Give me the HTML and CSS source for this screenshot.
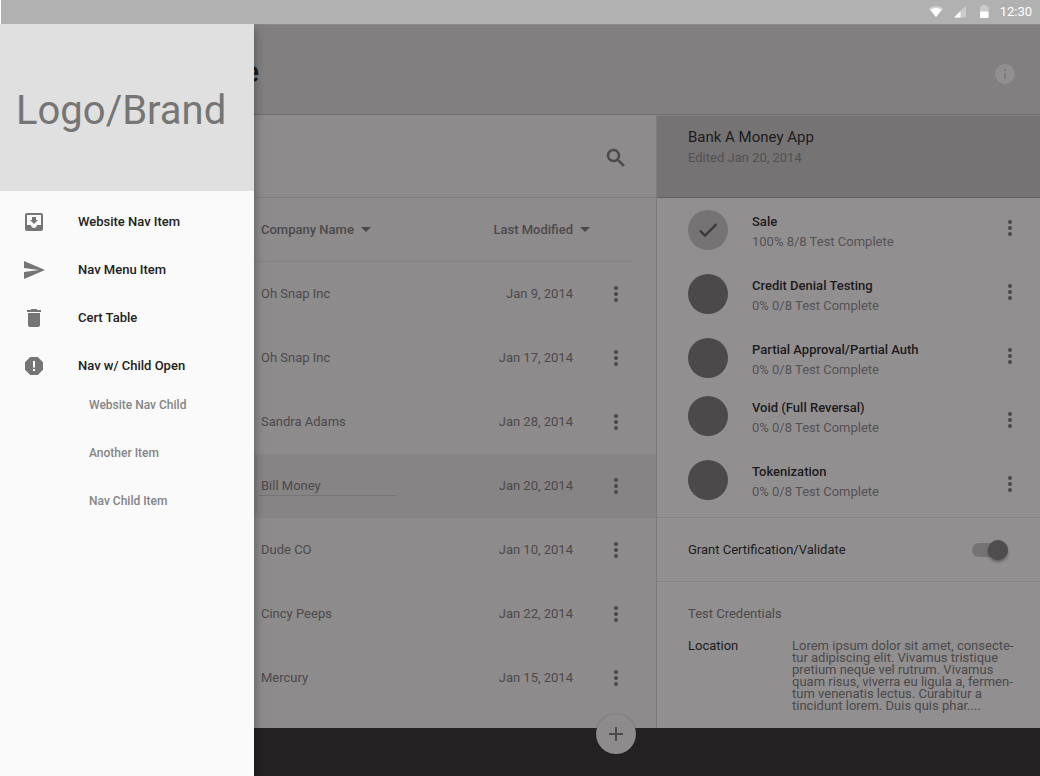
FILE: index.html
```html
<!DOCTYPE html>
<html lang="en">
<head>
<meta charset="utf-8">
<title>Certification Console</title>
<link rel="stylesheet" href="styles.css">
</head>
<body>
<svg width="0" height="0" class="sprite" aria-hidden="true">
  <symbol id="more" viewBox="0 0 24 24"><circle cx="12" cy="6" r="2"/><circle cx="12" cy="12" r="2"/><circle cx="12" cy="18" r="2"/></symbol>
</svg>
<div class="app">
  <div class="statusbar">
    <svg class="status-icon" viewBox="0 0 16 16"><path d="M1 4.400Q8 -.5 15 4.400L8 13z" fill="#cfcfcf"/><path d="M2 5.500Q8 2.500 14 5.500L8 13z" fill="#fff"/></svg>
    <svg class="status-icon" viewBox="0 0 16 16"><path d="M2 13.500L14 1.500V13.500z" fill="#cbcbcb"/><path d="M2 13.500L8.500 7V13.500z" fill="#fff"/></svg>
    <svg class="status-icon" viewBox="0 0 16 16"><path d="M4 13V3.500Q4 2.500 5 2.500H6V1H10.500V2.500H11.500Q12.500 2.500 12.500 3.500V13Q12.500 14 11.500 14H5Q4 14 4 13z" fill="#cbcbcb"/><path d="M4 7.500H12.500V13Q12.500 14 11.500 14H5Q4 14 4 13z" fill="#fff"/></svg>
    <time class="clock">12:30</time>
  </div>

  <aside class="drawer">
    <div class="brand">Logo/Brand</div>
    <nav class="nav">
      <a class="nav-item" href="#"><svg class="icon" viewBox="0 0 24 24"><path d="M19 3H4.990C3.880 3 3.010 3.900 3.010 5L3 19c0 1.100.880 2 1.990 2H19c1.100 0 2-.9 2-2V5c0-1.100-.9-2-2-2zm0 12h-4c0 1.660-1.350 3-3 3s-3-1.340-3-3H4.990V5H19v10zm-3-5h-2V7h-4v3H8l4 4 4-4z"/></svg>Website Nav Item</a>
      <a class="nav-item" href="#"><svg class="icon" viewBox="0 0 24 24"><path d="M2.010 21L23 12 2.010 3 2 10l15 2-15 2z"/></svg>Nav Menu Item</a>
      <a class="nav-item" href="#"><svg class="icon" viewBox="0 0 24 24"><path d="M6 19c0 1.100.9 2 2 2h8c1.100 0 2-.9 2-2V7H6v12zM19 4h-3.500l-1-1h-5l-1 1H5v2h14V4z"/></svg>Cert Table</a>
      <a class="nav-item" href="#"><svg class="icon" viewBox="0 0 24 24"><path d="M15.730 3H8.270L3 8.270v7.460L8.270 21h7.460L21 15.730V8.270z"/><path d="M11 7h2v6.500h-2zM11 15h2v2h-2z" fill="#fff"/></svg>Nav w/ Child Open</a>
      <div class="nav-children">
        <a class="nav-child" href="#">Website Nav Child</a>
        <a class="nav-child" href="#">Another Item</a>
        <a class="nav-child" href="#">Nav Child Item</a>
      </div>
    </nav>
  </aside>

  <header class="topbar">
    <h1 class="page-title">e</h1>
    <button class="icon-button" aria-label="Information"><svg class="icon info" viewBox="0 0 24 24"><circle cx="12" cy="12" r="10" fill="#918f90"/><path d="M11 7h2v2h-2zM11 11h2v6h-2z" fill="#7d7a7b"/></svg></button>
  </header>

  <main class="list-panel">
    <div class="toolbar">
      <button class="icon-button" aria-label="Search"><svg class="icon" viewBox="0 0 24 24"><path stroke="currentColor" stroke-width=".5" d="M15.500 14h-.79l-.28-.27C15.410 12.590 16 11.110 16 9.500 16 5.910 13.090 3 9.500 3S3 5.910 3 9.500 5.910 16 9.500 16c1.610 0 3.090-.59 4.230-1.570l.27.28v.79l5 4.990L20.490 19l-4.990-5zm-6 0C7.010 14 5 11.990 5 9.500S7.010 5 9.500 5 14 7.010 14 9.500 11.990 14 9.500 14z"/></svg></button>
    </div>
    <table class="companies">
      <colgroup><col><col class="col-date"><col class="col-menu"><col class="col-edge"></colgroup>
      <thead>
        <tr><th scope="col"><button class="sort">Company Name<span class="arrow"></span></button></th><th scope="col" colspan="2" class="th-date"><button class="sort">Last Modified<span class="arrow"></span></button></th><td></td></tr>
      </thead>
      <tbody>
        <tr><td>Oh Snap Inc</td><td class="date">Jan 9, 2014</td><td class="menu"><button class="icon-button" aria-label="More"><svg class="icon"><use href="#more"/></svg></button></td><td></td></tr>
        <tr><td>Oh Snap Inc</td><td class="date">Jan 17, 2014</td><td class="menu"><button class="icon-button" aria-label="More"><svg class="icon"><use href="#more"/></svg></button></td><td></td></tr>
        <tr><td>Sandra Adams</td><td class="date">Jan 28, 2014</td><td class="menu"><button class="icon-button" aria-label="More"><svg class="icon"><use href="#more"/></svg></button></td><td></td></tr>
        <tr class="selected"><td class="editing"><input class="name-input" aria-label="Company name" value="Bill Money"></td><td class="date">Jan 20, 2014</td><td class="menu"><button class="icon-button" aria-label="More"><svg class="icon"><use href="#more"/></svg></button></td><td></td></tr>
        <tr><td>Dude CO</td><td class="date">Jan 10, 2014</td><td class="menu"><button class="icon-button" aria-label="More"><svg class="icon"><use href="#more"/></svg></button></td><td></td></tr>
        <tr><td>Cincy Peeps</td><td class="date">Jan 22, 2014</td><td class="menu"><button class="icon-button" aria-label="More"><svg class="icon"><use href="#more"/></svg></button></td><td></td></tr>
        <tr><td>Mercury</td><td class="date">Jan 15, 2014</td><td class="menu"><button class="icon-button" aria-label="More"><svg class="icon"><use href="#more"/></svg></button></td><td></td></tr>
      </tbody>
    </table>
    <button class="fab" aria-label="Add"><svg class="icon" viewBox="0 0 24 24"><path d="M19 13h-6v6h-2v-6H5v-2h6V5h2v6h6v2z"/></svg></button>
  </main>

  <section class="detail">
    <header class="detail-head">
      <h2 class="detail-title">Bank A Money App</h2>
      <p class="detail-sub">Edited Jan 20, 2014</p>
    </header>
    <div class="tests">
      <ul class="test-list">
        <li class="test"><span class="dot done"><svg class="icon" viewBox="0 0 24 24"><path stroke="currentColor" stroke-width=".5" d="M9 16.170L4.830 12l-1.420 1.410L9 19 21 7l-1.410-1.410z"/></svg></span><div class="test-text"><h3>Sale</h3><p>100% 8/8 Test Complete</p></div></li>
        <li class="test"><span class="dot"></span><div class="test-text"><h3>Credit Denial Testing</h3><p>0% 0/8 Test Complete</p></div></li>
        <li class="test tight"><span class="dot"></span><div class="test-text"><h3>Partial Approval/Partial Auth</h3><p>0% 0/8 Test Complete</p></div></li>
        <li class="test"><span class="dot"></span><div class="test-text"><h3>Void (Full Reversal)</h3><p>0% 0/8 Test Complete</p></div></li>
        <li class="test"><span class="dot"></span><div class="test-text"><h3>Tokenization</h3><p>0% 0/8 Test Complete</p></div></li>
      </ul>
      <div class="test-menus">
        <button class="icon-button" aria-label="Sale options"><svg class="icon"><use href="#more"/></svg></button>
        <button class="icon-button" aria-label="Credit Denial Testing options"><svg class="icon"><use href="#more"/></svg></button>
        <button class="icon-button" aria-label="Partial Approval options"><svg class="icon"><use href="#more"/></svg></button>
        <button class="icon-button" aria-label="Void options"><svg class="icon"><use href="#more"/></svg></button>
        <button class="icon-button" aria-label="Tokenization options"><svg class="icon"><use href="#more"/></svg></button>
      </div>
    </div>
    <div class="grant">
      <label for="grant">Grant Certification/Validate</label>
      <input class="switch" type="checkbox" role="switch" id="grant" checked>
    </div>
    <div class="credentials">
      <h3 class="cred-title">Test Credentials</h3>
      <dl class="cred">
        <dt>Location</dt>
        <dd>Lorem ipsum dolor sit amet, consecte-<br>tur adipiscing elit. Vivamus tristique<br>pretium neque vel rutrum. Vivamus<br>quam risus, viverra eu ligula a, fermen-<br>tum venenatis lectus. Curabitur a<br>tincidunt lorem. Duis quis phar....</dd>
      </dl>
    </div>
  </section>

  <footer class="bottombar"></footer>
</div>
</body>
</html>
```
FILE: styles.css
```css
* { box-sizing: border-box; }
body { margin: 0; font: 13px/20px Roboto, sans-serif; color: #4c494a; }
h1, h2, h3, p, ul, dl, dd { margin: 0; padding: 0; font: inherit; }
ul { list-style: none; }
a { color: inherit; text-decoration: none; }
button { border: 0; padding: 0; background: none; font: inherit; color: inherit; cursor: pointer; }
.sprite { position: absolute; }
.icon { display: block; width: 24px; height: 24px; fill: currentColor; }
.icon-button { display: block; width: 24px; height: 24px; }

.app {
  display: grid;
  grid-template-columns: 254px 402fr 384fr;
  grid-template-rows: 24px 91px 1fr 48px;
  min-height: 100vh;
}

.statusbar {
  grid-column: 1 / -1;
  position: relative;
  z-index: 3;
  display: flex;
  align-items: center;
  justify-content: flex-end;
  gap: 8px;
  padding-right: 8px;
  background: #b1b1b1;
  border-left: 1px solid #fff;
  color: #fff;
}
.status-icon { width: 16px; height: 16px; }
.clock { font-size: 13px; line-height: 24px; }

.drawer {
  grid-column: 1;
  grid-row: 2 / 5;
  position: relative;
  z-index: 2;
  background: #fafafa;
  box-shadow: 0 4px 10px rgba(0, 0, 0, .4);
}
.brand {
  height: 167px;
  padding: 2px 16px 0;
  background: #e0e0e0;
  color: #757575;
  font-size: 40px;
  line-height: 170px;
}
.nav { padding-top: 7px; color: #212121; font-weight: 500; }
.nav-item { display: flex; align-items: center; gap: 32px; height: 48px; padding-left: 22px; }
.nav-item .icon { color: #757575; }
.nav-children { margin-top: -9px; color: #858585; font-size: 12px; }
.nav-child { display: flex; align-items: center; height: 48px; padding-left: 89px; }

.topbar {
  grid-column: 2 / 4;
  display: flex;
  align-items: center;
  justify-content: space-between;
  padding: 8px 23px 0 0;
  background: #827f80;
  border-top: 1px solid #8b8889;
  border-bottom: 1px solid #716e6f;
}
.page-title { margin-left: -11px; padding-bottom: 4px; color: #1d1b1c; font-size: 30px; font-weight: 500; line-height: 32px; }

.list-panel { grid-column: 2; position: relative; background: #8d8b8c; }
.toolbar {
  display: flex;
  align-items: center;
  justify-content: flex-end;
  height: 83px;
  padding: 3px 28px 0 0;
  border-bottom: 1px solid #817e7f;
}
.companies { width: 100%; table-layout: fixed; border-collapse: separate; border-spacing: 0; }
.companies tr { height: 64px; }
.companies th, .companies td { padding: 0; text-align: left; }
.companies th:first-child, .companies td:first-child { padding-left: 7px; }
.col-date { width: 120px; }
.col-menu { width: 59px; }
.col-edge { width: 24px; }
.companies th { border-bottom: 1px solid #858283; font-weight: 500; }
.companies .th-date { padding-right: 42px; text-align: right; }
.companies .date { text-align: right; }
.companies .menu { padding-left: 31px; }
.sort { display: inline-flex; align-items: center; gap: 7px; white-space: nowrap; }
.arrow { border: 5px solid transparent; border-top-color: currentColor; border-bottom: 0; }
.selected { background: #878485; }
.companies .editing:first-child { padding-left: 4px; }
.name-input {
  display: block;
  width: 139px;
  height: 20px;
  padding: 0 3px;
  border: 0;
  border-bottom: 1px solid #777475;
  background: none;
  color: inherit;
  font: inherit;
}
.fab {
  position: absolute;
  right: 20px;
  bottom: -26px;
  z-index: 1;
  display: grid;
  place-items: center;
  width: 40px;
  height: 40px;
  border-radius: 50%;
  background: #8d8b8c;
  box-shadow: 0 0 2px rgba(0, 0, 0, .3);
}

.detail { grid-column: 3; background: #918f90; border-left: 1px solid #7d7a7b; }
.detail-head { height: 83px; padding: 11px 31px; background: #757374; border-top: 1px solid #868384; border-bottom: 1px solid #646162; }
.detail-title { color: #1d1b1c; font-size: 15px; }
.detail-sub { padding-top: 1px; color: #535051; }
.tests { display: flex; justify-content: space-between; padding: 12px 18px 15px 31px; border-bottom: 1px solid #858283; }
.test { display: flex; gap: 24px; height: 42px; margin-bottom: 22px; }
.test.tight { margin-bottom: 16px; }
.test:last-child { margin-bottom: 0; }
.dot { display: grid; place-items: center; width: 40px; height: 40px; border-radius: 50%; background: #4b494a; }
.dot.done { background: #757374; color: #3d3a3b; }
.dot.done .icon { width: 24px; height: 24px; }
.test-text { padding-top: 2px; }
.test-text h3 { color: #1d1b1c; font-weight: 500; }
.test-text p { color: #555253; }
.test-menus { display: flex; flex-direction: column; gap: 40px; padding-top: 6px; }
.grant { display: flex; align-items: center; justify-content: space-between; height: 64px; padding: 0 32px 0 31px; border-bottom: 1px solid #858283; color: #1d1b1c; }
.switch {
  appearance: none;
  position: relative;
  width: 36px;
  height: 14px;
  margin: 0;
  border-radius: 7px;
  background: #757374;
}
.switch::before {
  content: "";
  position: absolute;
  top: -3px;
  right: 0;
  width: 20px;
  height: 20px;
  border-radius: 50%;
  background: #4f4d4e;
  box-shadow: 0 2px 3px rgba(0, 0, 0, .35);
}
.credentials { padding: 22px 24px 12px 31px; }
.cred-title { margin-bottom: 16px; }
.cred { display: grid; grid-template-columns: 104px 1fr; line-height: 12px; }
.cred dt { color: #1d1b1c; }
.cred dd { white-space: nowrap; }

.bottombar { grid-column: 2 / 4; background: #242223; }
```
